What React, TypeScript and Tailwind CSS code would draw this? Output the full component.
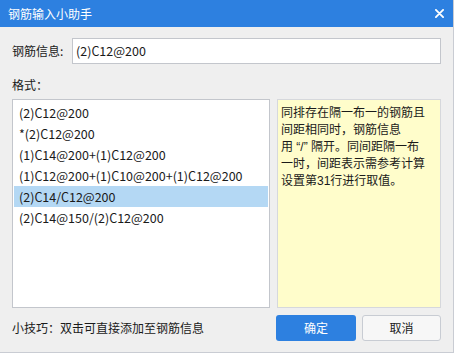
const items = [
  '(2)C12@200',
  '*(2)C12@200',
  '(1)C14@200+(1)C12@200',
  '(1)C12@200+(1)C10@200+(1)C12@200',
  '(2)C14/C12@200',
  '(2)C14@150/(2)C12@200',
];

const help = [
  '同排存在隔一布一的钢筋且',
  '间距相同时，钢筋信息',
  '用 “/” 隔开。同间距隔一布',
  '一时，间距表示需参考计算',
  '设置第31行进行取值。',
];

const font = { fontFamily: '"Noto Sans CJK SC", "Noto Sans", sans-serif' };
const helpFont = { fontFamily: '"Liberation Sans", "Noto Sans CJK SC", sans-serif' };

export default function App() {
  return (
    <div
      className="w-[454px] h-[353px] flex flex-col bg-[#efefef] border-r border-b border-[#c9ccd3] text-[12px] text-[#1a1a1a] overflow-hidden"
      style={font}
    >
      {/* Title bar */}
      <div className="h-[27px] flex items-center justify-between bg-[#2d80e0] pl-[8px] pr-[9px] text-white">
        <span className="leading-none">钢筋输入小助手</span>
        <svg width="9" height="9" viewBox="0 0 10 10">
          <path d="M1 1 L9 9 M9 1 L1 9" stroke="white" strokeWidth="2" strokeLinecap="round" />
        </svg>
      </div>

      <div className="flex-1 flex flex-col pl-[12px] pr-[12px]">
        {/* Info input */}
        <div className="flex items-center mt-[11px] h-[26px]">
          <span className="w-[60px] shrink-0">钢筋信息:</span>
          <div className="flex-1 h-[26px] bg-white border border-[#c3c6cc] flex items-center pl-[3px] text-[12.5px]">
            (2)C12@200
          </div>
        </div>

        <div className="mt-[13px] h-[16px] leading-[16px]">格式：</div>

        <div className="flex mt-[6px] h-[209px] gap-[7px]">
          {/* List */}
          <div className="w-[258px] bg-white border border-[#c3c6cc] pt-[2px] px-[1px] text-[12.5px]">
            {items.map((it, i) => (
              <div
                key={it}
                className={
                  'h-[21px] leading-[21px] pl-[5px] whitespace-nowrap ' +
                  (i === 4 ? 'bg-[#b4d8f4]' : '')
                }
              >
                {it}
              </div>
            ))}
          </div>

          {/* Help */}
          <div
            className="flex-1 bg-[#fffdcb] border border-[#d6d8dc] pl-[3px] pr-[3px] pt-[5px] leading-[17px]"
            style={helpFont}
          >
            {help.map((l) => (
              <div key={l} className="whitespace-nowrap">
                {l}
              </div>
            ))}
          </div>
        </div>

        {/* Footer */}
        <div className="flex items-center mt-[7px] h-[26px]">
          <span className="flex-1">小技巧：双击可直接添加至钢筋信息</span>
          <button className="w-[80px] h-[26px] rounded-[3px] bg-[#2d80e0] text-white">确定</button>
          <button className="w-[79px] h-[26px] ml-[6px] rounded-[3px] bg-[#f7f7f7] border border-[#c8ccd3]">
            取消
          </button>
        </div>
      </div>
    </div>
  );
}
